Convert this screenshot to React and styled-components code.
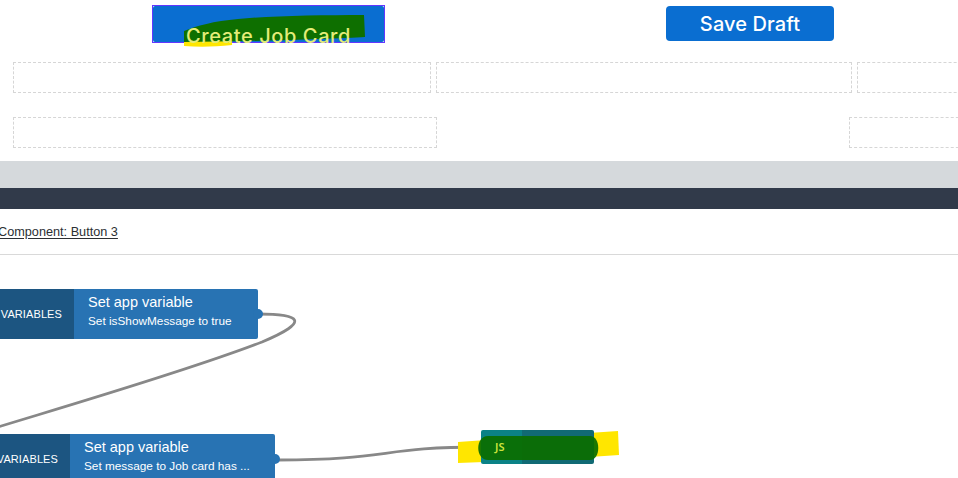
import React from 'react';
import styled, { createGlobalStyle } from 'styled-components';

const GlobalStyle = createGlobalStyle`
  html, body {
    margin: 0;
    padding: 0;
    background: #fff;
    overflow: hidden;
  }
  body {
    font-family: "Liberation Sans", Arial, sans-serif;
  }
`;

const Page = styled.div`
  width: 958px;
  height: 478px;
  overflow: hidden;
  display: flex;
  flex-direction: column;
  position: relative;
`;

// --- form preview on top ---
const Preview = styled.div`
  height: 161px;
  background: #fff;
  display: flex;
  flex-direction: column;
  position: relative;
`;

const ButtonRow = styled.div`
  display: flex;
  align-items: flex-start;
  padding: 5px 0 0 152px;
  height: 60px;
  box-sizing: border-box;
`;

const SelectedFrame = styled.div`
  width: 233px;
  height: 38px;
  border: 1px solid #6236ff;
  box-sizing: border-box;
  position: relative;
`;

const PrimaryButton = styled.button`
  all: unset;
  box-sizing: border-box;
  display: flex;
  justify-content: center;
  align-items: ${({ $low }) => ($low ? 'flex-end' : 'center')};
  width: ${({ $w }) => $w}px;
  height: ${({ $h }) => $h}px;
  margin-left: ${({ $ml }) => $ml || 0}px;
  margin-top: ${({ $mt }) => $mt || 0}px;
  background: #0a6ed1;
  border-radius: ${({ $r }) => $r}px;
  color: ${({ $tint }) => $tint || '#fff'};
  font-family: Inter, "Noto Sans", sans-serif;
  font-size: 20px;
  font-weight: 500;
  letter-spacing: ${({ $ls }) => $ls || 0.1}px;
  line-height: 1;
  position: relative;
  overflow: visible;
`;

const Label = styled.span`
  position: relative;
  z-index: 2;
  transform: ${({ $shift }) => ($shift ? 'translateY(4px)' : 'none')};
`;

const FieldGrid = styled.div`
  display: grid;
  grid-template-columns: 418px 416px 120px;
  column-gap: 5px;
  padding-left: 13px;
  margin-top: 2px;
`;

const FieldGrid2 = styled.div`
  display: grid;
  grid-template-columns: 424px 120px;
  column-gap: 412px;
  padding-left: 13px;
  margin-top: 24px;
`;

const Field = styled.div`
  height: 31px;
  box-sizing: border-box;
  border: 1px dashed #d6d6d6;
`;

const GreyBar = styled.div`
  height: 27px;
  background: #d5d9dc;
`;

const DarkBar = styled.div`
  height: 21px;
  background: #313a4a;
`;

const CrumbRow = styled.div`
  height: 46px;
  border-bottom: 1px solid #d9d9d9;
  box-sizing: border-box;
  display: flex;
  align-items: center;
  margin-left: -2px;
  padding-top: 1px;
`;

const Crumb = styled.a`
  font-family: "Liberation Sans", Arial, sans-serif;
  font-size: 12.7px;
  color: #2b2f33;
  text-decoration: underline;
  text-underline-offset: 2px;
`;

// --- logic canvas ---
const Canvas = styled.div`
  flex: 1;
  position: relative;
  background: #fff;
`;

const Wires = styled.svg`
  position: absolute;
  left: 0;
  top: 0;
  pointer-events: none;
`;

const Node = styled.div`
  position: absolute;
  left: ${({ $x }) => $x}px;
  top: ${({ $y }) => $y}px;
  height: 50px;
  display: flex;
  border-radius: 2px;
  color: #fff;
`;

const NodeKind = styled.div`
  width: ${({ $w }) => $w}px;
  background: #1c5581;
  display: flex;
  align-items: center;
  justify-content: flex-end;
  padding-right: 12px;
  box-sizing: border-box;
  font-size: 11px;
  letter-spacing: 0.1px;
`;

const NodeBody = styled.div`
  width: ${({ $w }) => $w}px;
  background: #2873b3;
  border-radius: 0 2px 2px 0;
  display: flex;
  flex-direction: column;
  padding: 5px 0 0 14px;
  box-sizing: border-box;
  position: relative;
`;

const NodeTitle = styled.div`
  font-size: 14.5px;
  line-height: 17px;
`;

const NodeSub = styled.div`
  font-size: 11.8px;
  line-height: 15px;
  margin-top: 3px;
`;

const Port = styled.span`
  position: absolute;
  top: 50%;
  right: -5px;
  width: 10px;
  height: 10px;
  margin-top: -5px;
  border-radius: 50%;
  background: #2873b3;
`;

const JsNode = styled.div`
  position: absolute;
  left: 481px;
  top: 175px;
  width: 113px;
  height: 34px;
  display: flex;
  border-radius: 2px;
  overflow: hidden;
  z-index: 1;
`;

const JsKind = styled.div`
  width: 41px;
  background: #0b8286;
`;

const JsBody = styled.div`
  flex: 1;
  background: #116a74;
`;

const JsLabel = styled.span`
  position: absolute;
  left: 495px;
  top: 184px;
  z-index: 3;
  font-family: "Noto Sans", sans-serif;
  font-size: 11px;
  font-weight: 600;
  color: #cde43c;
`;

const Marker = styled.svg`
  position: absolute;
  left: 0;
  top: 0;
  pointer-events: none;
  z-index: ${({ $z }) => $z};
`;

export default function App() {
  return (
    <>
      <GlobalStyle />
      <Page>
        <Preview>
          <ButtonRow>
            <SelectedFrame>
              <PrimaryButton $w={231} $h={36} $r={2} $low $tint="#e4ec78" $ls={0.6}>
                <Label $shift>Create Job Card</Label>
              </PrimaryButton>
            </SelectedFrame>
            <PrimaryButton $w={168} $h={35} $r={4} $ml={281} $mt={1}>
              <Label>Save Draft</Label>
            </PrimaryButton>
          </ButtonRow>
          <FieldGrid>
            <Field />
            <Field />
            <Field />
          </FieldGrid>
          <FieldGrid2>
            <Field />
            <Field />
          </FieldGrid2>
          {/* highlighter marks over the button */}
          <Marker width="958" height="161" $z={1}>
            <path d="M184 46 L184 40 L232 41 L232 45 C214 47 198 47 184 46 Z" fill="#ffe600" />
            <path
              d="M184 31 C196 26 214 21 238 19 C270 16 320 15 364 15 L365 37 C330 39 290 40 250 41 L184 42 Z"
              fill="#0e6f00"
            />
          </Marker>
        </Preview>
        <GreyBar />
        <DarkBar />
        <CrumbRow>
          <Crumb>Component: Button 3</Crumb>
        </CrumbRow>
        <Canvas>
          <Wires width="958" height="223">
            <path
              d="M258 59 C300 59 312 66 262 87 C190 115 70 150 -2 172"
              fill="none"
              stroke="#888"
              strokeWidth="2.8"
            />
            <path
              d="M278 205 C390 205 380 192 482 192"
              fill="none"
              stroke="#888"
              strokeWidth="2.8"
            />
          </Wires>
          <Node $x={-20} $y={34}>
            <NodeKind $w={94}>VARIABLES</NodeKind>
            <NodeBody $w={184}>
              <NodeTitle>Set app variable</NodeTitle>
              <NodeSub>Set isShowMessage to true</NodeSub>
              <Port />
            </NodeBody>
          </Node>
          <Node $x={-16} $y={179}>
            <NodeKind $w={86}>VARIABLES</NodeKind>
            <NodeBody $w={205}>
              <NodeTitle>Set app variable</NodeTitle>
              <NodeSub>Set message to Job card has ...</NodeSub>
              <Port />
            </NodeBody>
          </Node>
          <Marker width="958" height="223" $z={0}>
            <path d="M458 187 L500 184 L618 176 L619 200 L560 204 L458 208 Z" fill="#ffe600" />
          </Marker>
          <JsNode>
            <JsKind />
            <JsBody />
          </JsNode>
          <Marker width="958" height="223" $z={2}>
            <path
              d="M488 181 L590 181 C601 181 601 205 590 205 L488 205 C475 205 475 181 488 181 Z"
              fill="#0b6e00"
              opacity="0.93"
            />
          </Marker>
          <JsLabel>JS</JsLabel>
        </Canvas>
      </Page>
    </>
  );
}
